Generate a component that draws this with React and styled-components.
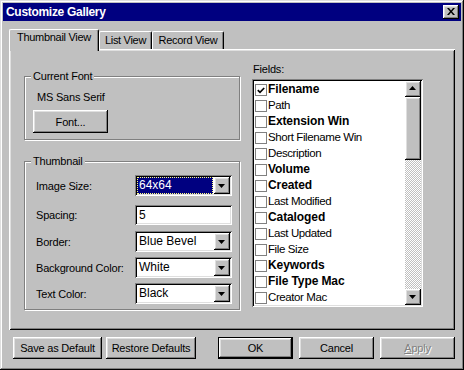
import React from "react";
import styled, { createGlobalStyle, css } from "styled-components";

const GlobalStyle = createGlobalStyle`
  html, body { margin: 0; padding: 0; background: #c0c0c0; }
  body { font-family: "Liberation Sans", Arial, sans-serif; font-size: 11px; color: #000; }
  * { box-sizing: border-box; }
`;

const raised = css`
  box-shadow: inset -1px -1px #000, inset 1px 1px #fff, inset -2px -2px #808080, inset 2px 2px #dfdfdf;
`;
const sunken = css`
  box-shadow: inset 1px 1px #808080, inset -1px -1px #fff, inset 2px 2px #000, inset -2px -2px #dfdfdf;
`;

const Window = styled.div`
  width: 464px;
  height: 370px;
  background: #c0c0c0;
  padding: 3px;
  display: flex;
  flex-direction: column;
  box-shadow: inset -1px -1px #000, inset 1px 1px #dfdfdf, inset -2px -2px #808080, inset 2px 2px #fff;
`;

const TitleBar = styled.div`
  height: 18px;
  flex: 0 0 18px;
  background: #000080;
  color: #fff;
  display: flex;
  align-items: center;
  justify-content: space-between;
  padding: 0 2px 0 3px;
  font-weight: bold;
  font-size: 12px;
  letter-spacing: -0.3px;
`;

const CloseButton = styled.div`
  width: 16px;
  height: 14px;
  background: #c0c0c0;
  ${raised};
  display: flex;
  align-items: center;
  justify-content: center;
  padding-bottom: 1px;
  padding-right: 1px;
`;

const Body = styled.div`
  flex: 1;
  padding: 8px 6px 0;
  display: flex;
  flex-direction: column;
`;

const TabRow = styled.div`
  height: 20px;
  flex: 0 0 20px;
  display: flex;
  align-items: flex-start;
`;

const Tab = styled.div`
  position: relative;
  z-index: ${(p) => (p.$active ? 2 : 1)};
  width: ${(p) => p.$w}px;
  height: ${(p) => (p.$active ? 22 : 18)}px;
  margin-top: ${(p) => (p.$active ? 0 : 2)}px;
  background: #c0c0c0;
  border-top: 1px solid #fff;
  border-left: 1px solid #fff;
  border-right: 1px solid #000;
  border-radius: 2px 2px 0 0;
  box-shadow: inset -1px 0 #808080;
  text-align: center;
  line-height: 13px;
  padding-top: ${(p) => (p.$active ? 1 : 2)}px;
  letter-spacing: -0.3px;
`;

const Panel = styled.div`
  flex: 0 0 281px;
  height: 281px;
  background: #c0c0c0;
  box-shadow: inset 1px 1px #fff, inset -1px -1px #000, inset 2px 2px #dfdfdf, inset -2px -2px #808080;
  padding: 14px 0 0 15px;
  display: grid;
  grid-template-columns: 216px 171px;
  column-gap: 12px;
  align-items: start;
`;

const LeftCol = styled.div`
  margin-top: 13px;
  display: flex;
  flex-direction: column;
`;

const Group = styled.div`
  position: relative;
  height: ${(p) => p.$h}px;
  margin-top: ${(p) => p.$top || 0}px;
  border: 1px solid #808080;
  box-shadow: inset 1px 1px #fff, 1px 1px #fff;
  padding: ${(p) => p.$pad};
`;

const Legend = styled.span`
  position: absolute;
  top: -7px;
  left: 6px;
  padding: 0 2px;
  background: #c0c0c0;
  line-height: 13px;
  letter-spacing: -0.2px;
`;

const FontName = styled.div`
  line-height: 13px;
  padding-left: 4px;
  letter-spacing: -0.2px;
`;

const Button = styled.div`
  width: ${(p) => p.$w}px;
  height: ${(p) => p.$h || 22}px;
  margin-top: ${(p) => p.$top || 0}px;
  background: #c0c0c0;
  display: flex;
  align-items: center;
  justify-content: center;
  letter-spacing: -0.2px;
  color: ${(p) => (p.$disabled ? "#808080" : "#000")};
  text-shadow: ${(p) => (p.$disabled ? "1px 1px #fff" : "none")};
  ${(p) =>
    p.$default
      ? css`
          box-shadow: inset 0 0 0 1px #000, inset -2px -2px #000, inset 2px 2px #fff, inset -3px -3px #808080,
            inset 3px 3px #dfdfdf;
        `
      : raised};
`;

const Underline = styled.span`
  text-decoration: underline;
`;

const Row = styled.div`
  display: grid;
  grid-template-columns: 99px 97px;
  align-items: center;
  height: 21px;
  margin-top: ${(p) => p.$top || 0}px;
  letter-spacing: -0.2px;
`;

const Combo = styled.div`
  width: 97px;
  height: 21px;
  background: #fff;
  ${sunken};
  padding: 2px;
  display: flex;
  gap: 1px;
`;

const ComboValue = styled.div`
  flex: 1;
  line-height: 17px;
  padding-left: 2px;
  font-size: 12px;
  letter-spacing: 0;
  ${(p) =>
    p.$selected &&
    css`
      background: #000080;
      color: #fff;
      outline: 1px dotted #ffff80;
      outline-offset: -1px;
    `}
`;

const ArrowButton = styled.div`
  width: 16px;
  height: ${(p) => p.$h || 17}px;
  flex: 0 0 16px;
  background: #c0c0c0;
  ${raised};
  display: flex;
  align-items: center;
  justify-content: center;
  padding-right: 1px;
  padding-bottom: ${(p) => (p.$up ? 2 : 0)}px;
`;

const TextInput = styled.div`
  width: 97px;
  height: 20px;
  background: #fff;
  ${sunken};
  padding: 2px 0 0 4px;
  line-height: 16px;
  font-size: 12px;
`;

const RightCol = styled.div`
  display: flex;
  flex-direction: column;
`;

const FieldsLabel = styled.div`
  line-height: 13px;
  margin-bottom: 3px;
  padding-left: 1px;
  letter-spacing: -0.2px;
`;

const ListBox = styled.div`
  width: 171px;
  height: 228px;
  background: #fff;
  ${sunken};
  padding: 2px;
  display: flex;
`;

const List = styled.div`
  flex: 1;
  display: flex;
  flex-direction: column;
`;

const Item = styled.div`
  height: 16px;
  flex: 0 0 16px;
  display: flex;
  align-items: center;
  padding-left: 1px;
`;

const CheckBox = styled.div`
  width: 12px;
  height: 12px;
  margin-top: 2px;
  margin-right: 1px;
  background: #fff;
  border: 1px solid #808080;
  display: flex;
  align-items: center;
  justify-content: center;
`;

const ItemLabel = styled.span`
  font-size: ${(p) => (p.$bold ? 12 : 11.5)}px;
  font-weight: ${(p) => (p.$bold ? "bold" : "normal")};
  letter-spacing: ${(p) => (p.$bold ? "-0.1px" : "-0.4px")};
  line-height: 14px;
  margin-top: ${(p) => (p.$bold ? -1 : 0)}px;
`;

const ScrollBar = styled.div`
  width: 16px;
  flex: 0 0 16px;
  display: flex;
  flex-direction: column;
`;

const Track = styled.div`
  flex: 1;
  background-color: #fff;
  background-image: repeating-conic-gradient(#c0c0c0 0% 25%, #fff 0% 50%);
  background-size: 2px 2px;
`;

const Thumb = styled.div`
  height: 63px;
  background: #c0c0c0;
  ${raised};
`;

const Footer = styled.div`
  margin-top: 7px;
  padding: 0 0 0 4px;
  display: flex;
  align-items: center;
`;

const ButtonGroup = styled.div`
  display: flex;
  gap: ${(p) => p.$gap}px;
  margin-left: ${(p) => (p.$right ? "auto" : "0")};
`;

const DownArrow = () => (
  <svg width="7" height="4" viewBox="0 0 7 4">
    <polygon points="0,0 7,0 3.5,4" fill="#000" />
  </svg>
);
const UpArrow = () => (
  <svg width="7" height="4" viewBox="0 0 7 4">
    <polygon points="0,4 7,4 3.5,0" fill="#000" />
  </svg>
);

const fields = [
  ["Filename", true, true],
  ["Path", false, false],
  ["Extension Win", true, false],
  ["Short Filename Win", false, false],
  ["Description", false, false],
  ["Volume", true, false],
  ["Created", true, false],
  ["Last Modified", false, false],
  ["Cataloged", true, false],
  ["Last Updated", false, false],
  ["File Size", false, false],
  ["Keywords", true, false],
  ["File Type Mac", true, false],
  ["Creator Mac", false, false],
];

const ComboBox = ({ value, selected }) => (
  <Combo>
    <ComboValue $selected={selected}>{value}</ComboValue>
    <ArrowButton>
      <DownArrow />
    </ArrowButton>
  </Combo>
);

export default function App() {
  return (
    <>
      <GlobalStyle />
      <Window>
        <TitleBar>
          <span>Customize Gallery</span>
          <CloseButton>
            <svg width="8" height="7" viewBox="0 0 8 7">
              <path d="M0 0h2l2 2.5L6 0h2L5 3.5 8 7H6L4 4.5 2 7H0l3-3.5z" fill="#000" />
            </svg>
          </CloseButton>
        </TitleBar>
        <Body>
          <TabRow>
            <Tab $active $w={90}>Thumbnail View</Tab>
            <Tab $w={53}>List View</Tab>
            <Tab $w={72}>Record View</Tab>
          </TabRow>
          <Panel>
            <LeftCol>
              <Group $h={64} $pad="14px 0 0 8px">
                <Legend>Current Font</Legend>
                <FontName>MS Sans Serif</FontName>
                <Button $w={75} $h={23} $top={6}>
                  Font...
                </Button>
              </Group>
              <Group $h={149} $top={21} $pad="13px 0 0 11px">
                <Legend>Thumbnail</Legend>
                <Row>
                  <span>Image Size:</span>
                  <ComboBox value="64x64" selected />
                </Row>
                <Row $top={8}>
                  <span>Spacing:</span>
                  <TextInput>5</TextInput>
                </Row>
                <Row $top={6}>
                  <span>Border:</span>
                  <ComboBox value="Blue Bevel" />
                </Row>
                <Row $top={5}>
                  <span>Background Color:</span>
                  <ComboBox value="White" />
                </Row>
                <Row $top={5}>
                  <span>Text Color:</span>
                  <ComboBox value="Black" />
                </Row>
              </Group>
            </LeftCol>
            <RightCol>
              <FieldsLabel>Fields:</FieldsLabel>
              <ListBox>
                <List>
                  {fields.map(([name, bold, checked]) => (
                    <Item key={name}>
                      <CheckBox>
                        {checked && (
                          <svg width="8" height="7" viewBox="0 0 8 7">
                            <polyline points="0.8,3.2 3,5.4 7.2,1" fill="none" stroke="#000" strokeWidth="1.7" />
                          </svg>
                        )}
                      </CheckBox>
                      <ItemLabel $bold={bold}>{name}</ItemLabel>
                    </Item>
                  ))}
                </List>
                <ScrollBar>
                  <ArrowButton $h={16} $up>
                    <UpArrow />
                  </ArrowButton>
                  <Track>
                    <Thumb />
                  </Track>
                  <ArrowButton $h={16}>
                    <DownArrow />
                  </ArrowButton>
                </ScrollBar>
              </ListBox>
            </RightCol>
          </Panel>
          <Footer>
            <ButtonGroup $gap={4}>
              <Button $w={89}>Save as Default</Button>
              <Button $w={90}>Restore Defaults</Button>
            </ButtonGroup>
            <ButtonGroup $gap={6} $right>
              <Button $w={75} $default>
                OK
              </Button>
              <Button $w={75}>Cancel</Button>
              <Button $w={75} $disabled>
                <span>
                  <Underline>A</Underline>pply
                </span>
              </Button>
            </ButtonGroup>
          </Footer>
        </Body>
      </Window>
    </>
  );
}
